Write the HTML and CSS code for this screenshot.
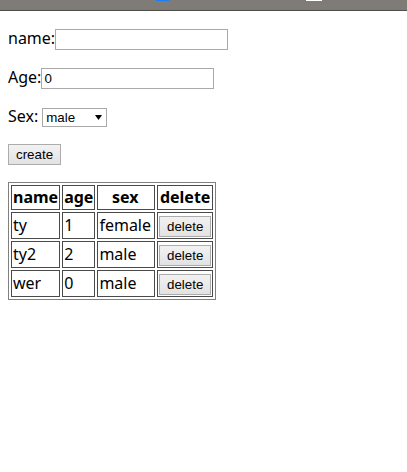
FILE: index.html
```html
<!DOCTYPE html>
<html>
<head>
<meta charset="utf-8">
<link rel="stylesheet" href="styles.css">
</head>
<body>
<div class="topbar"><span class="mark blue"></span><span class="mark white"></span></div>
<main class="page">
  <div class="row r1"><span class="label">name:</span><input class="field" type="text"></div>
  <div class="row r2"><span class="label">Age:</span><input class="field" type="text" value="0"></div>
  <div class="row r3"><span class="label">Sex:</span>
    <span class="selwrap">
      <select class="sel"><option>male</option><option>female</option></select>
      <svg class="arrow" width="7" height="5" viewBox="0 0 7 5"><path d="M0 0H7L3.5 5Z" fill="#000"/></svg>
    </span>
  </div>
  <div class="row r4"><button class="btn">create</button></div>
  <table class="grid">
    <thead>
      <tr><th>name</th><th>age</th><th class="c3">sex</th><th>delete</th></tr>
    </thead>
    <tbody>
      <tr><td>ty</td><td>1</td><td class="c3">female</td><td><button class="btn">delete</button></td></tr>
      <tr><td>ty2</td><td>2</td><td class="c3">male</td><td><button class="btn">delete</button></td></tr>
      <tr><td>wer</td><td>0</td><td class="c3">male</td><td><button class="btn">delete</button></td></tr>
    </tbody>
  </table>
</main>
</body>
</html>
```
FILE: styles.css
```css
html, body {
  margin: 0;
  padding: 0;
  background: #fff;
}
body {
  font-family: "Noto Sans", "Liberation Sans", sans-serif;
  font-size: 16px;
  color: #000;
}
.topbar {
  position: relative;
  height: 10px;
  background: #7f7c77;
  border-bottom: 1px solid #4f4e4b;
}
.mark {
  position: absolute;
  top: 0;
  height: 1px;
}
.mark.blue { left: 156px; width: 13px; background: #1e7df0; }
.mark.white { left: 306px; width: 16px; background: #fff; }
.page {
  padding-left: 8px;
  display: flex;
  flex-direction: column;
  align-items: flex-start;
}
.row {
  display: flex;
  align-items: baseline;
}
.r1 { margin-top: 18px; }
.r2 { margin-top: 18px; }
.r3 { margin-top: 18px; }
.r4 { margin-top: 17px; }
.label {
  line-height: 18px;
}
.r3 .label { margin-right: 4px; }
.field {
  box-sizing: border-box;
  width: 173px;
  height: 21px;
  margin: 0;
  padding: 1px 2px;
  border: 1px solid #a9a9a9;
  font-family: "Liberation Sans", sans-serif;
  font-size: 13.33px;
  color: #000;
  background: #fff;
}
.selwrap {
  position: relative;
  display: inline-flex;
}
.sel {
  -webkit-appearance: none;
  appearance: none;
  box-sizing: border-box;
  width: 65px;
  height: 19px;
  margin: 0;
  padding: 0 0 0 3px;
  border: 1px solid #a9a9a9;
  border-radius: 0;
  background: #fff;
  font-family: "Liberation Sans", sans-serif;
  font-size: 13.33px;
  color: #000;
}
.arrow {
  position: absolute;
  left: 53px;
  top: 7px;
}
.btn {
  box-sizing: border-box;
  height: 21px;
  margin: 0;
  padding: 0 7px;
  border: 1px solid #acacac;
  border-radius: 0;
  background: linear-gradient(#f2f2f2, #e2e2e2);
  font-family: "Liberation Sans", sans-serif;
  font-size: 13.33px;
  color: #000;
}
.grid {
  margin-top: 17px;
  border: 1px solid #808080;
  border-spacing: 2px;
}
.grid th, .grid td {
  border: 1px solid #4a4a4a;
  padding: 1px;
  line-height: 21px;
}
.grid th {
  font-weight: bold;
  text-align: center;
}
.grid td {
  text-align: left;
  height: 23px;
}
.grid .c3 {
  padding-right: 3px;
}
```
